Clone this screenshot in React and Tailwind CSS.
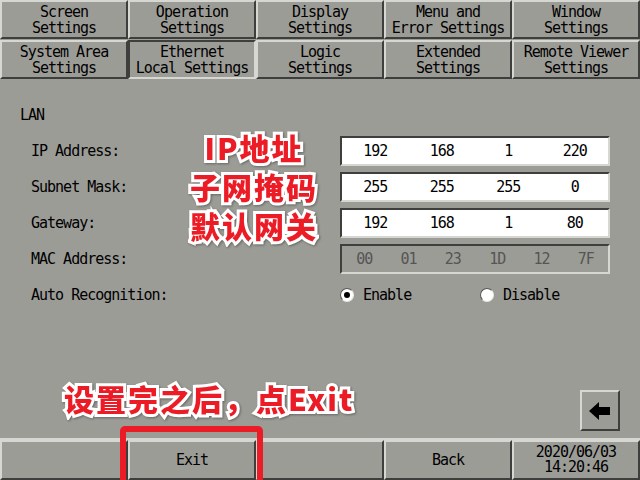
const tabs = [
  ['Screen', 'Settings'],
  ['Operation', 'Settings'],
  ['Display', 'Settings'],
  ['Menu and', 'Error Settings'],
  ['Window', 'Settings'],
  ['System Area', 'Settings'],
  ['Ethernet', 'Local Settings'],
  ['Logic', 'Settings'],
  ['Extended', 'Settings'],
  ['Remote Viewer', 'Settings'],
];

const raised =
  'border-2 border-t-[#d6d6d2] border-l-[#d6d6d2] border-b-[#3e3e3c] border-r-[#3e3e3c]';
const sunken =
  'border-2 border-t-[#3e3e3c] border-l-[#3e3e3c] border-b-[#d6d6d2] border-r-[#d6d6d2]';

const outline =
  "font-['Noto_Sans_CJK_SC',sans-serif] font-black text-[#ec1c26] [paint-order:stroke_fill] [-webkit-text-stroke:6px_white] [filter:drop-shadow(1px_1px_1px_rgba(0,0,0,0.35))]";

const IpBox = ({ values }) => (
  <div className={`w-[270px] h-[30px] bg-white ${sunken} grid grid-cols-4 items-center text-center`}>
    {values.map((v, i) => (
      <span key={i}>{v}</span>
    ))}
  </div>
);

const Radio = ({ checked, label }) => (
  <div className="flex items-center gap-[9px]">
    <span className="w-[14px] h-[14px] rounded-full bg-white border border-t-[#555] border-l-[#555] border-b-[#e6e6e6] border-r-[#e6e6e6] flex items-center justify-center">
      {checked && <span className="w-[6px] h-[6px] rounded-full bg-black" />}
    </span>
    <span>{label}</span>
  </div>
);

export default function App() {
  const rows = [
    ['IP Address:', <IpBox values={['192', '168', '1', '220']} />],
    ['Subnet Mask:', <IpBox values={['255', '255', '255', '0']} />],
    ['Gateway:', <IpBox values={['192', '168', '1', '80']} />],
    [
      'MAC Address:',
      <div className={`w-[270px] h-[30px] bg-[#9c9c97] ${sunken} grid grid-cols-6 items-center text-center text-[#555553]`}>
        {['00', '01', '23', '1D', '12', '7F'].map((v) => (
          <span key={v}>{v}</span>
        ))}
      </div>,
    ],
    [
      'Auto Recognition:',
      <div className="flex w-[270px]">
        <div className="w-[140px]">
          <Radio checked label="Enable" />
        </div>
        <Radio label="Disable" />
      </div>,
    ],
  ];

  return (
    <div className="relative w-[640px] h-[480px] overflow-hidden bg-[#9c9c97] text-black font-['DejaVu_Sans_Mono',monospace] text-[15px] tracking-[-1px] flex flex-col">
      <div className="grid grid-cols-5 gap-y-[1px]">
        {tabs.map(([a, b], i) => (
          <div
            key={i}
            className={`h-[39px] ${i === 6 ? sunken : raised} flex flex-col items-center justify-center leading-[16px]`}
          >
            <span>{a}</span>
            <span>{b}</span>
          </div>
        ))}
      </div>

      <div className="flex-1 flex flex-col pt-[18px]">
        <div className="h-[36px] flex items-center pl-[20px]">LAN</div>
        {rows.map(([label, field], i) => (
          <div key={i} className="h-[36px] flex items-center">
            <div className="w-[340px] pl-[31px]">{label}</div>
            {field}
          </div>
        ))}
        <div className="flex-1" />
        <div className="flex justify-end pr-[20px] pb-[7px]">
          <div className={`w-[40px] h-[41px] ${raised} flex items-center justify-center`}>
            <svg width="22" height="18" viewBox="0 0 22 18">
              <path d="M0 9 L10 0 L10 5 L21 5 L21 13 L10 13 L10 18 Z" fill="black" />
            </svg>
          </div>
        </div>
      </div>

      <div className="h-[42px] border-t-2 border-t-[#d6d6d2] grid grid-cols-5">
        <div className={raised} />
        <div className={`${raised} flex items-center justify-center`}>Exit</div>
        <div className={raised} />
        <div className={`${raised} flex items-center justify-center`}>Back</div>
        <div className={`${raised} flex flex-col items-center justify-center leading-[15px]`}>
          <span>2020/06/03</span>
          <span>14:20:46</span>
        </div>
      </div>

      <div className={`absolute left-[172px] top-[128px] w-[164px] text-center text-[30px] leading-[39px] tracking-[2px] ${outline}`}>
        <div>IP地址</div>
        <div>子网掩码</div>
        <div>默认网关</div>
      </div>

      <div className={`absolute left-[64px] top-[382px] text-[30px] leading-[32px] tracking-[2px] ${outline}`}>
        设置完之后，点Exit
      </div>

      <div className="absolute left-[120px] top-[426px] w-[143px] h-[60px] border-[6px] border-[#ec1c26] rounded-[5px]" />
    </div>
  );
}
